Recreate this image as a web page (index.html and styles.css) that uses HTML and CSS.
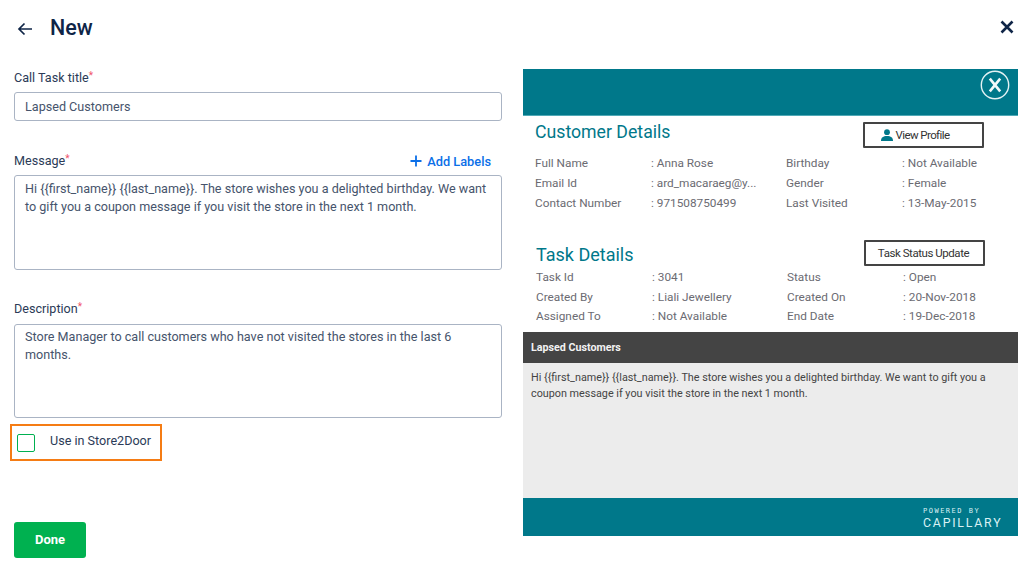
FILE: index.html
```html
<!DOCTYPE html>
<html lang="en">
<head>
<meta charset="utf-8">
<title>New</title>
<link rel="stylesheet" href="styles.css">
</head>
<body>
<header class="topbar">
  <div class="topbar-left">
    <svg class="back" width="16" height="14" viewBox="0 0 16 14"><path d="M15 7H2M7.5 1.5 2 7l5.5 5.5" fill="none" stroke="#0f2547" stroke-width="1.7"/></svg>
    <h1 class="title">New</h1>
  </div>
  <svg class="close" width="14" height="14" viewBox="0 0 14 14"><path d="M1.5 1.5l11 11M12.5 1.5l-11 11" fill="none" stroke="#0f2547" stroke-width="2.6"/></svg>
</header>
<main class="content">
  <form class="form">
    <div class="label-row first"><span class="label">Call Task title<sup class="req">*</sup></span></div>
    <div class="input">Lapsed Customers</div>
    <div class="label-row msg">
      <span class="label">Message<sup class="req">*</sup></span>
      <span class="add"><svg width="12" height="12" viewBox="0 0 12 12"><path d="M6 .5v11M.5 6h11" stroke="#0b6fe8" stroke-width="1.8" fill="none"/></svg>Add Labels</span>
    </div>
    <div class="area a1">Hi {{first_name}} {{last_name}}. The store wishes you a delighted birthday. We want to gift you a coupon message if you visit the store in the next 1 month.</div>
    <div class="label-row desc"><span class="label">Description<sup class="req">*</sup></span></div>
    <div class="area a2">Store Manager to call customers who have not visited the stores in the last 6 months.</div>
    <div class="highlight"><span class="check"></span><span class="check-label">Use in Store2Door</span></div>
    <div class="btn">Done</div>
  </form>
  <section class="preview">
    <div class="pv-top">
      <svg width="30" height="30" viewBox="0 0 30 30"><circle cx="15" cy="15" r="13.7" fill="none" stroke="#e4f2f4" stroke-width="1.4"/><path d="M9.8 8.6l10.4 12.8M20.2 8.6L9.8 21.4" stroke="#f2f9fa" stroke-width="2.6" fill="none"/></svg>
    </div>
    <div class="pv-head h1">
      <h2 class="pv-title">Customer Details</h2>
      <div class="pv-btn b1"><svg width="12" height="12" viewBox="0 0 12 12"><circle cx="6" cy="3.2" r="2.9" fill="#00788a"/><path d="M0 12c0-3.6 2.2-5 6-5s6 1.4 6 5z" fill="#00788a"/></svg>View Profile</div>
    </div>
    <div class="pv-grid g1">
      <span>Full Name</span><span>: Anna Rose</span><span>Birthday</span><span>: Not Available</span>
      <span>Email Id</span><span>: ard_macaraeg@y...</span><span>Gender</span><span>: Female</span>
      <span>Contact Number</span><span>: 971508750499</span><span>Last Visited</span><span>: 13-May-2015</span>
    </div>
    <div class="pv-head h2">
      <h2 class="pv-title big">Task Details</h2>
      <div class="pv-btn b2">Task Status Update</div>
    </div>
    <div class="pv-grid g2">
      <span>Task Id</span><span>: 3041</span><span>Status</span><span>: Open</span>
      <span>Created By</span><span>: Liali Jewellery</span><span>Created On</span><span>: 20-Nov-2018</span>
      <span>Assigned To</span><span>: Not Available</span><span>End Date</span><span>: 19-Dec-2018</span>
    </div>
    <div class="pv-dark">Lapsed Customers</div>
    <div class="pv-body">Hi {{first_name}} {{last_name}}. The store wishes you a delighted birthday. We want to gift you a coupon message if you visit the store in the next 1 month.</div>
    <div class="pv-foot"><div class="brand"><span class="brand-small">POWERED BY</span><span class="brand-big">CAPILLARY</span></div></div>
  </section>
</main>
</body>
</html>
```
FILE: styles.css
```css
* { box-sizing: border-box; }
html, body { margin: 0; padding: 0; background: #fff; }
body { width: 1032px; height: 568px; overflow: hidden; font-family: Roboto, "Liberation Sans", sans-serif; color: #2b3b57; }

.topbar { display: flex; justify-content: space-between; align-items: center; height: 54px; padding: 0 18px 0 17px; }
.topbar-left { display: flex; align-items: center; }
.back { margin-top: 4px; }
.title { margin: 1px 0 0 17px; font-size: 21.5px; line-height: 26px; font-weight: 500; color: #0f2547; }
.close { margin-top: 0; }

.content { display: flex; align-items: flex-start; padding-left: 14px; }
.form { width: 488px; display: flex; flex-direction: column; }
.label-row { display: flex; justify-content: space-between; align-items: center; height: 18px; padding-right: 11px; }
.label-row.first { margin-top: 15px; margin-bottom: 5px; }
.label-row.msg { margin-top: 31px; margin-bottom: 5px; }
.label-row.desc { margin-top: 30px; margin-bottom: 6px; }
.label { font-size: 12.6px; line-height: 18px; color: #2b3b57; }
.req { color: #f0546a; font-size: 10px; line-height: 0; vertical-align: 3px; }
.add { display: flex; align-items: center; gap: 5px; font-size: 12.8px; font-weight: 500; color: #0b6fe8; }

.input { height: 29px; border: 1px solid #aab4c4; border-radius: 3px; padding: 0 10px; font-size: 12.6px; line-height: 27px; color: #46546c; }
.area { border: 1px solid #aab4c4; border-radius: 3px; padding: 3px 10px; font-size: 12.6px; line-height: 18px; color: #46546c; }
.a1 { height: 95px; padding-top: 4px; }
.a2 { height: 94px; }

.highlight { display: flex; align-items: center; width: 152px; height: 37px; margin: 6px 0 0 -4px; padding-left: 5px; border: 2px solid #f57c14; }
.check { width: 18px; height: 18px; border: 1px solid #00b050; border-radius: 2px; }
.check-label { margin-left: 15px; font-size: 12.6px; line-height: 16px; margin-top: -4px; color: #2b3b57; }

.btn { width: 72px; height: 36px; margin-top: 61px; background: #00b150; border-radius: 3px; color: #fff; font-size: 13px; font-weight: 700; line-height: 35px; text-align: center; }

.preview { width: 495px; height: 467px; margin: 15px 0 0 21px; display: flex; flex-direction: column; font-family: Roboto, sans-serif; }
.pv-top { height: 47px; flex: none; background: #00788a; border-bottom: 1px solid #4fa9b6; display: flex; justify-content: flex-end; align-items: flex-start; padding: 1px 8px 0 0; }
.pv-head { display: flex; justify-content: space-between; align-items: center; flex: none; }
.h1 { height: 28px; margin-top: 5px; padding: 0 34px 0 12px; }
.h2 { height: 30px; margin-top: 25px; padding: 0 33px 0 13px; }
.pv-title { margin: -6px 0 0; font-size: 17.7px; line-height: 24px; font-weight: 400; color: #00788a; }
.pv-title.big { font-size: 18px; margin-top: 4px; }
.pv-btn { display: flex; align-items: center; justify-content: center; gap: 3px; width: 121px; height: 26px; border: 2px solid #444; border-radius: 1px; font-size: 11.5px; letter-spacing: -.45px; color: #333; background: #fff; }
.b1 { padding: 0 17px 1px 0; letter-spacing: -.6px; }
.b2 { padding-right: 2px; }

.pv-grid { display: grid; grid-template-columns: 116px 135px 116px 1fr; flex: none; font-size: 11.8px; color: #6b6b72; }
.pv-grid span { white-space: nowrap; }
.g1 { grid-auto-rows: 20px; line-height: 20px; margin-top: 4px; padding-left: 12px; }
.g2 { grid-auto-rows: 19.5px; line-height: 19.5px; margin-top: 0; padding-left: 13px; }

.pv-dark { height: 31px; flex: none; margin-top: 5px; background: #444; color: #f2f2f2; font-size: 10.7px; font-weight: 700; line-height: 31px; padding-left: 8px; }
.pv-body { flex: 1; background: #ececec; color: #444; font-size: 10.8px; line-height: 16px; padding: 7px 20px 0 8px; }
.pv-foot { height: 38px; flex: none; background: #00788a; display: flex; justify-content: flex-end; align-items: center; padding: 3px 0 0 0; }
.brand { display: flex; flex-direction: column; color: #d9f1f4; width: 95px; }
.brand-small { font-family: "DejaVu Sans Mono", monospace; font-size: 7px; line-height: 8.5px; letter-spacing: 1.5px; white-space: nowrap; }
.brand-big { font-size: 12.3px; line-height: 14.5px; letter-spacing: 1.8px; font-weight: 400; white-space: nowrap; }
```
